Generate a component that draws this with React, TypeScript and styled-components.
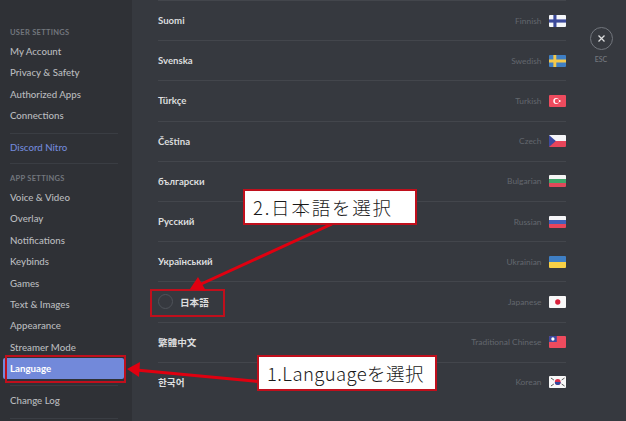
import React from "react";
import styled, { createGlobalStyle } from "styled-components";

const Global = createGlobalStyle`
  html, body { margin: 0; padding: 0; background: #36393f; }
  body { width: 626px; height: 421px; overflow: hidden; font-family: Lato, "Noto Sans", "Noto Sans CJK JP", sans-serif; }
`;

const Page = styled.div`
  position: relative;
  display: flex;
  width: 626px;
  height: 421px;
  overflow: hidden;
  background: #36393f;
`;

const Sidebar = styled.nav`
  box-sizing: border-box;
  width: 132px;
  flex: none;
  padding: 27px 8px 0 3px;
  background: #2f3136;
  display: flex;
  flex-direction: column;
`;

const SideLabel = styled.div`
  height: 12px;
  line-height: 12px;
  padding-left: 7px;
  margin-bottom: 2px;
  font-size: 7.5px;
  font-weight: 700;
  letter-spacing: 0.3px;
  color: #72767d;
`;

const SideItem = styled.div<{ $active?: boolean; $accent?: boolean }>`
  height: 21.4px;
  line-height: 21.4px;
  padding-left: 7px;
  border-radius: 2px;
  font-size: 9.7px;
  font-weight: ${(p) => (p.$active ? 700 : 500)};
  color: ${(p) => (p.$active ? "#ffffff" : p.$accent ? "#7289da" : "#b9bbbe")};
  background: ${(p) => (p.$active ? "#7289da" : "transparent")};
`;

const SideRule = styled.div<{ $top: number; $bottom: number }>`
  height: 1px;
  margin: ${(p) => p.$top}px 6px ${(p) => p.$bottom}px 7px;
  background: #3a3d43;
`;

const Content = styled.main`
  width: 408px;
  flex: none;
  margin-left: 26px;
  display: flex;
  flex-direction: column;
`;

const Row = styled.div`
  box-sizing: border-box;
  height: 40.2px;
  flex: none;
  display: flex;
  align-items: center;
  border-top: 1px solid #43464c;
`;

const Radio = styled.span`
  box-sizing: border-box;
  width: 15px;
  height: 15px;
  margin-right: 7px;
  border: 1.5px solid #4f535a;
  border-radius: 50%;
`;

const NativeName = styled.span`
  font-size: 9.6px;
  font-weight: 700;
  color: #dcddde;
`;

const EnglishName = styled.span`
  margin-left: auto;
  margin-right: 7px;
  font-size: 8.4px;
  color: #63676e;
`;

const FlagBox = styled.svg`
  width: 17.5px;
  height: 12px;
  flex: none;
  border-radius: 1px;
  display: block;
`;

const CloseColumn = styled.aside`
  width: 70px;
  flex: none;
  padding-top: 27px;
  display: flex;
  flex-direction: column;
  align-items: center;
`;

const CloseCircle = styled.div`
  box-sizing: border-box;
  width: 23px;
  height: 23px;
  border: 1.3px solid #72767d;
  border-radius: 50%;
  display: flex;
  align-items: center;
  justify-content: center;
`;

const EscLabel = styled.div`
  margin-top: 5px;
  font-size: 7px;
  font-weight: 600;
  color: #72767d;
`;

const Overlay = styled.svg`
  position: absolute;
  left: 0;
  top: 0;
  pointer-events: none;
`;

const RedFrame = styled.div<{ $x: number; $y: number; $w: number; $h: number }>`
  position: absolute;
  box-sizing: border-box;
  left: ${(p) => p.$x}px;
  top: ${(p) => p.$y}px;
  width: ${(p) => p.$w}px;
  height: ${(p) => p.$h}px;
  border: 2.5px solid #c00f1c;
`;

const Callout = styled(RedFrame)`
  display: flex;
  align-items: center;
  background: #ffffff;
  color: #1a1a1a;
  font-family: "Noto Sans CJK JP", "Noto Sans", sans-serif;
  font-weight: 300;
  white-space: nowrap;
`;

const CalloutTop = styled(Callout)`
  padding-left: 8px;
  font-size: 18.5px;
  letter-spacing: 1.8px;
`;

const CalloutBottom = styled(Callout)`
  padding-left: 8px;
  font-size: 18.5px;
  letter-spacing: 0.4px;
`;

type FlagName = "fi" | "se" | "tr" | "cz" | "bg" | "ru" | "ua" | "jp" | "tw" | "kr";

const Flag = ({ name }: { name: FlagName }) => {
  const art: Record<FlagName, React.ReactNode> = {
    fi: (<>
      <rect width="18" height="12" fill="#f5f7fa" />
      <rect x="4.5" width="3.2" height="12" fill="#3c4a9a" />
      <rect y="4.4" width="18" height="3.2" fill="#3c4a9a" />
    </>),
    se: (<>
      <rect width="18" height="12" fill="#3f7fc4" />
      <rect x="4.5" width="3" height="12" fill="#f4c94a" />
      <rect y="4.5" width="18" height="3" fill="#f4c94a" />
    </>),
    tr: (<>
      <rect width="18" height="12" fill="#ee4b5e" />
      <circle cx="7.4" cy="6" r="3" fill="#fff" />
      <circle cx="8.2" cy="6" r="2.3" fill="#ee4b5e" />
      <circle cx="11" cy="6" r="1" fill="#fff" />
    </>),
    cz: (<>
      <rect width="18" height="6" fill="#f5f5f8" />
      <rect y="6" width="18" height="6" fill="#e8455a" />
      <path d="M0 0 L7 6 L0 12 Z" fill="#3d4a9e" />
    </>),
    bg: (<>
      <rect width="18" height="4" fill="#f5f5f5" />
      <rect y="4" width="18" height="4" fill="#3fa56a" />
      <rect y="8" width="18" height="4" fill="#e0495a" />
    </>),
    ru: (<>
      <rect width="18" height="4" fill="#f5f5f8" />
      <rect y="4" width="18" height="4" fill="#4160b8" />
      <rect y="8" width="18" height="4" fill="#e8455a" />
    </>),
    ua: (<>
      <rect width="18" height="6" fill="#3f7fc4" />
      <rect y="6" width="18" height="6" fill="#f7d046" />
    </>),
    jp: (<>
      <rect width="18" height="12" fill="#f8f8f8" />
      <circle cx="9" cy="6" r="2.7" fill="#d8203a" />
    </>),
    tw: (<>
      <rect width="18" height="12" fill="#ee4b5e" />
      <rect width="8" height="6" fill="#3d4a9e" />
      <circle cx="4" cy="3" r="1.7" fill="#fff" />
    </>),
    kr: (<>
      <rect width="18" height="12" fill="#f8f8f8" />
      <circle cx="9" cy="6" r="3" fill="#d8304a" />
      <path d="M6 6 A3 3 0 0 0 12 6 Z" fill="#2f4aa0" />
      <path d="M2 2 L5 4 M13 4 L16 2 M2 10 L5 8 M13 8 L16 10" stroke="#555" strokeWidth="1" />
    </>),
  };
  return <FlagBox viewBox="0 0 18 12" preserveAspectRatio="none">{art[name]}</FlagBox>;
};

const languages: { native: string; english: string; flag: FlagName; radio?: boolean }[] = [
  { native: "Suomi", english: "Finnish", flag: "fi" },
  { native: "Svenska", english: "Swedish", flag: "se" },
  { native: "Türkçe", english: "Turkish", flag: "tr" },
  { native: "Čeština", english: "Czech", flag: "cz" },
  { native: "български", english: "Bulgarian", flag: "bg" },
  { native: "Русский", english: "Russian", flag: "ru" },
  { native: "Український", english: "Ukrainian", flag: "ua" },
  { native: "日本語", english: "Japanese", flag: "jp", radio: true },
  { native: "繁體中文", english: "Traditional Chinese", flag: "tw" },
  { native: "한국어", english: "Korean", flag: "kr" },
];

const userItems = ["My Account", "Privacy & Safety", "Authorized Apps", "Connections"];
const appItems = ["Voice & Video", "Overlay", "Notifications", "Keybinds", "Games", "Text & Images", "Appearance", "Streamer Mode"];

export default function App() {
  return (
    <Page>
      <Global />
      <Sidebar>
        <SideLabel>USER SETTINGS</SideLabel>
        {userItems.map((t) => <SideItem key={t}>{t}</SideItem>)}
        <SideRule $top={6} $bottom={3} />
        <SideItem $accent>Discord Nitro</SideItem>
        <SideRule $top={5} $bottom={9} />
        <SideLabel>APP SETTINGS</SideLabel>
        {appItems.map((t) => <SideItem key={t}>{t}</SideItem>)}
        <SideItem $active>Language</SideItem>
        <SideRule $top={6} $bottom={4} />
        <SideItem>Change Log</SideItem>
        <SideRule $top={6} $bottom={0} />
      </Sidebar>
      <Content>
        {languages.map((l) => (
          <Row key={l.english}>
            {l.radio && <Radio />}
            <NativeName>{l.native}</NativeName>
            <EnglishName>{l.english}</EnglishName>
            <Flag name={l.flag} />
          </Row>
        ))}
      </Content>
      <CloseColumn>
        <CloseCircle>
          <svg width="9" height="9" viewBox="0 0 9 9">
            <path d="M1.5 1.5 L7.5 7.5 M7.5 1.5 L1.5 7.5" stroke="#dcddde" strokeWidth="1.3" />
          </svg>
        </CloseCircle>
        <EscLabel>ESC</EscLabel>
      </CloseColumn>

      <RedFrame $x={5} $y={355} $w={121} $h={28} />
      <RedFrame $x={150} $y={289} $w={75} $h={28} />
      <Overlay width="626" height="421" viewBox="0 0 626 421">
        <path d="M258 381.5 L136 370" stroke="#e00010" strokeWidth="3" />
        <path d="M127 369 L140 362 L139 377 Z" fill="#e00010" />
        <path d="M332 224 L199 285" stroke="#e00010" strokeWidth="3" />
        <path d="M190 289 L198 277 L206 291 Z" fill="#e00010" />
      </Overlay>
      <CalloutTop $x={243} $y={189} $w={174} $h={36}>2.日本語を選択</CalloutTop>
      <CalloutBottom $x={257} $y={355} $w={180} $h={36}>1.Languageを選択</CalloutBottom>
    </Page>
  );
}
